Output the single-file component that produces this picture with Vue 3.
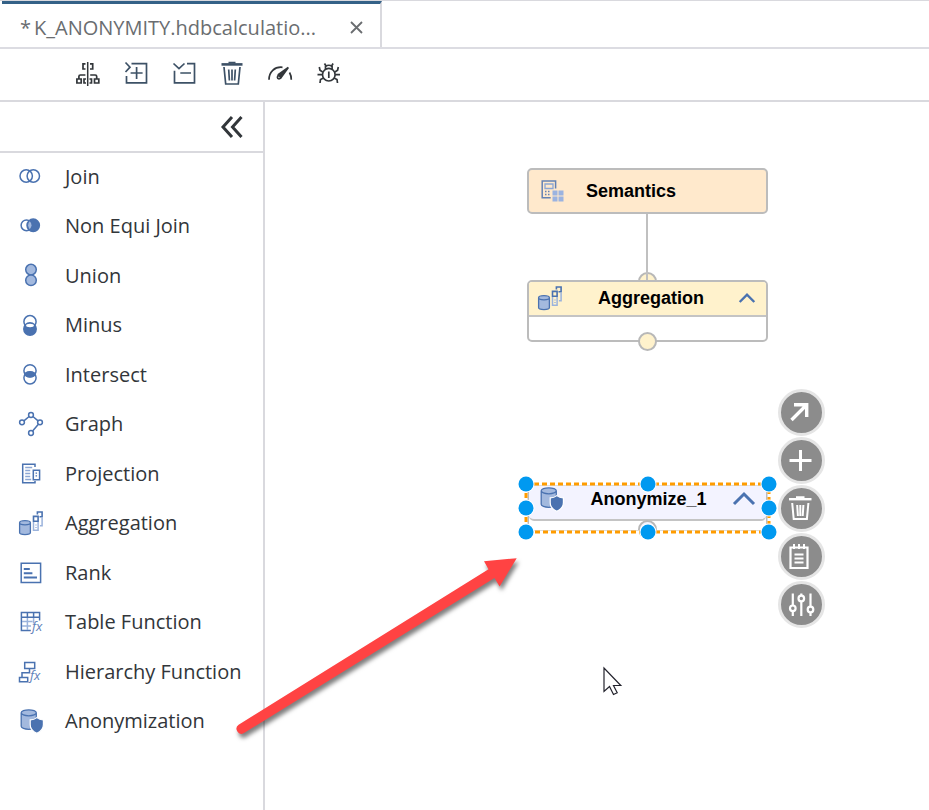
<script setup>
import { ref } from 'vue'

const cylinder = (x1, x2, y1, y2, ry) => {
  const rx = (x2 - x1) / 2
  return `<path fill="#a3b9de" stroke="#4a72b0" stroke-width="1.3" d="M${x1} ${y1 + ry}V${y2 - ry}A${rx} ${ry} 0 0 0 ${x2} ${y2 - ry}V${y1 + ry}A${rx} ${ry} 0 0 0 ${x1} ${y1 + ry}A${rx} ${ry} 0 0 0 ${x2} ${y1 + ry}"/>`
}

const art = {
  join: '<circle cx="8.2" cy="12" r="6.2"/><circle cx="15.3" cy="12" r="6.2"/>',
  nonEqui: '<circle cx="8.5" cy="11.3" r="5.4"/><circle cx="15.2" cy="11.3" r="6.2" fill="#4a72b0"/><path fill="#a3b9de" stroke="none" d="M11.7 7.3a5.4 5.4 0 0 1 0 8a6 6 0 0 1 0-8z"/>',
  union: '<g fill="#a3b9de"><circle cx="13" cy="6.6" r="5.3"/><circle cx="13" cy="17.2" r="5.3"/></g>',
  minus: '<circle cx="12" cy="16" r="6.2" fill="#4a72b0"/><circle cx="12" cy="8.7" r="6.1"/><ellipse cx="12" cy="12.5" rx="3.9" ry="1.7" fill="#fff" stroke="none"/>',
  intersect: '<circle cx="12" cy="8.8" r="6.1"/><circle cx="12" cy="15.8" r="6.1"/><ellipse cx="12" cy="12.3" rx="4.8" ry="2.4" fill="#4a72b0"/>',
  graph: '<circle cx="13" cy="3" r="2.4"/><circle cx="4" cy="10.3" r="2.4"/><circle cx="22" cy="10.3" r="2.4"/><circle cx="13" cy="21" r="2.4"/><path d="M11.1 4.5L5.9 8.8M14.9 4.5l5.2 4.3M20.4 12.2l-5.8 6.9"/>',
  projection: '<path d="M17 6V3.3H4.7v18.4H17V20"/><path stroke="#8ba6d4" d="M7.2 6.5h7M7.2 9.5h5M7.2 12.5h5M7.2 15.5h5M7.2 18.5h6"/><path d="M15.3 9.2h6.3v9.6h-6.3z"/><path stroke-dasharray="1.3 1.5" d="M18.3 11.5v5"/>',
  aggregation: cylinder(1.6, 12.4, 9.7, 23.7, 2.1) + '<path stroke-width="1.6" d="M15.5 5.4h4.6v4.8h-4.6zM19.4 3.4V1h4.7v4.8h-2.6"/><path stroke="#9bb3dc" stroke-width="1.5" d="M15.5 11v8.2h4.6V11M24.1 6.5v8.2h-2.2M18 13.5v1M18 16v1"/>',
  rank: '<path stroke-width="1.5" d="M3.2 3.2h19.4v19.4H3.2z"/><path stroke-width="2" d="M5.8 9h6M5.8 13.2h8.6M5.8 17.6H19"/>',
  table: '<path stroke-width="1.5" d="M3.4 2.6h18.2v4.6H3.4zM9.4 2.6v4.6M15.6 2.6v4.6M3.4 7v13.6h9.4M21.6 7v3.4"/><path stroke="#9bb3dc" d="M9.4 8v12M15.6 8v5.5M4 11.6h10.5M4 16h9"/><text x="14" y="21.2" font-family="Open Sans, sans-serif" font-style="italic" font-size="13" fill="#5d80b9" stroke="none">fx</text>',
  hierarchy: '<path stroke-width="1.5" d="M6.7 3.4h10v6.2h-10zM1.5 18.4h8.2v4.4H1.5zM11.5 9.7v4H4v4.5"/><text x="12" y="21.2" font-family="Open Sans, sans-serif" font-style="italic" font-size="13" fill="#5d80b9" stroke="none">fx</text>',
  anonymization: cylinder(3.2, 18.3, 0.8, 20.3, 3) + '<path fill="#4a72b0" stroke="#fff" stroke-width="1.2" d="M18.8 8.6q3 2.4 6.6 2.3v4.8q0 5.6-6.6 8.6q-6.6-3-6.6-8.6v-4.8q3.6 .1 6.6-2.3z"/>',
  semantics: '<g stroke="#6482b4"><path stroke-width="1.5" d="M15.6 9.5V2H2.2v16.8h8.5"/><path stroke="#8ba6d4" d="M5 5h8v4.5H5z"/><path stroke-width="1.5" stroke-dasharray="1.5 1.5" d="M5 12.5h6M5 15.5h6"/></g><path fill="#9bb3e0" stroke="none" d="M12.5 11.5h5v5h-5zM18.5 11.5h5v5h-5zM12.5 17.5h5v5h-5zM18.5 17.5h5v5h-5z"/>'
}

const tools = [
  { label: 'Auto layout', tone: 'dark', art: '<path d="M11.7 0v24" stroke-width="1.5"/><path d="M9.5 1.8H7v5.2h2.5M14 1.8h2.7v5.2H14M2.9 17v-2.5q0-1.5 1.5-1.5h5M20.7 17v-2.5q0-1.5-1.5-1.5h-5M.9 17h4.3v4H.9zM18.5 17h4.3v4h-4.3zM10 17H8v4h2M13.5 17h2v4h-2"/>' },
  { label: 'Expand all', tone: 'slate', art: '<path d="M1.5 .5L6 5.2 1.5 10M7.5 1.6h15v19.2h-20V14M12.6 5v12M6.6 11h12"/>' },
  { label: 'Collapse all', tone: 'slate', art: '<path d="M1.5 1.5L7 6.7l5.5-5.2M15 1.6h7.5v19.2h-20V8.7M8.3 11H19"/>' },
  { label: 'Delete', tone: 'slate', art: '<path stroke-width="2.6" d="M1.5 2.4h21"/><path d="M8.5 .7h7M4 5l1.7 17h12.6l1.7-17M8.7 7.5l.7 11M12 7.5v11M15.3 7.5l-.7 11"/>' },
  { label: 'Performance', tone: 'dark', art: '<path d="M1 17.7C1 10 6.5 4.5 14.5 5.3M21.5 10.5q1.8 3 1.8 7.2"/><circle cx="11" cy="15.3" r="1.6"/><path fill="currentColor" d="M10.5 12.5L20.3 5.5l-7.3 10z"/>' },
  { label: 'Debug', tone: 'dark', art: '<circle cx="12.8" cy="12.7" r="6.3"/><path d="M12.8 9.5v6.5M9.5 7V4.5q3.3-2.5 6.6 0V7M10 4L8.5 1.5M15.6 4l1.5-2.5M6.7 10L4 8.3 3.3 5M18.9 10l2.7-1.7.7-3.3M6.5 12.7h-5M19 12.7h5M7.5 16l-3 1.5L4 21M18 16l3 1.5.5 3.5"/>' }
]

const palette = [
  ['Join', 'join'], ['Non Equi Join', 'nonEqui'], ['Union', 'union'], ['Minus', 'minus'],
  ['Intersect', 'intersect'], ['Graph', 'graph'], ['Projection', 'projection'],
  ['Aggregation', 'aggregation'], ['Rank', 'rank'], ['Table Function', 'table'],
  ['Hierarchy Function', 'hierarchy'], ['Anonymization', 'anonymization']
]

const actions = [
  { label: 'Connect', art: '<path stroke-width="3.4" d="M2.5 20L17 5.5M5 4.8h12.7V17"/>' },
  { label: 'Add', art: '<path stroke-width="3" d="M11.5 2v21M.5 12.5h22"/>' },
  { label: 'Delete', art: '<path stroke-width="2.4" d="M0 3.2h22.5"/><path stroke-width="2" d="M7 1.3h8.5M3.2 7l1.5 16h13.2l1.5-16M8.2 9l.7 11M11.3 9v11M14.4 9l-.7 11"/>' },
  { label: 'Details', art: '<path stroke-width="2.2" d="M1.5 3.5h17v20.5h-17z"/><path stroke-width="2" d="M5 0v5M10 0v5M15 0v5M5.5 10.5h9M5.5 14.5h9M5.5 18.5h9"/>' },
  { label: 'Settings', art: '<g stroke-width="2.2"><path d="M3.8 1.5v12M3.8 19v5M12.3 1.5v2M12.3 9.5v14.5M21.5 1.5v13M21.5 20.5v3.5"/><circle cx="3.8" cy="16.3" r="2.8"/><circle cx="12.3" cy="6.5" r="2.8"/><circle cx="21.5" cy="17.5" r="2.8"/></g>' }
]

const handles = ['nw', 'n', 'ne', 'w', 'e', 'sw', 's', 'se']
const selected = ref('Anonymize_1')
</script>

<template>
  <div class="page">
    <header class="tabs" role="tablist">
      <div class="tab">
        <button class="tab-name" role="tab" aria-selected="true"><span>*</span><span>K_ANONYMITY.hdbcalculatio...</span></button>
        <button class="close" aria-label="Close">
          <svg width="11" height="11" viewBox="0 0 11 11"><path d="M0 0l11 11M11 0L0 11" stroke="currentColor" stroke-width="1.8" /></svg>
        </button>
      </div>
    </header>

    <nav class="toolbar" aria-label="Editor tools">
      <button v-for="t in tools" :key="t.label" :class="t.tone" :aria-label="t.label">
        <svg width="25" height="24" viewBox="0 0 25 24" fill="none" stroke="currentColor" stroke-width="1.7" v-html="t.art" />
      </button>
    </nav>

    <main class="workspace">
      <aside class="sidebar">
        <div class="side-head">
          <button aria-label="Collapse palette">
            <svg width="22" height="22" viewBox="0 0 22 22" fill="none" stroke="#32363a" stroke-width="3"><path d="M11 1L2 11l9 10M20.5 1l-9 10 9 10" /></svg>
          </button>
        </div>
        <ul class="palette">
          <li v-for="[label, icon] in palette" :key="label">
            <button>
              <svg width="26" height="26" viewBox="0 -1 26 26" fill="none" stroke="#4a72b0" stroke-width="1.5" v-html="art[icon]" />
              <span>{{ label }}</span>
            </button>
          </li>
        </ul>
      </aside>

      <section class="canvas" aria-label="Calculation view">
        <div class="port port-top"></div>
        <div class="link"></div>

        <article class="node semantics">
          <svg width="26" height="26" viewBox="0 -1 26 26" fill="none" stroke-width="1.3" v-html="art.semantics" />
          <h2>Semantics</h2>
        </article>

        <article class="node aggregation">
          <div class="node-head">
            <svg width="26" height="26" viewBox="0 -1 26 26" fill="none" stroke="#4a72b0" stroke-width="1.3" v-html="art.aggregation" />
            <h2>Aggregation</h2>
            <button aria-label="Collapse Aggregation">
              <svg width="16" height="10" viewBox="0 0 16 10" fill="none" stroke="#4a72b0" stroke-width="2.4"><path d="M.7 9L8 1.7 15.3 9" /></svg>
            </button>
          </div>
          <div class="port port-bottom"></div>
        </article>

        <article class="node anonymize" @click="selected = 'Anonymize_1'">
          <div class="node-head">
            <svg width="26" height="26" viewBox="0 -1 26 26" fill="none" stroke="#4a72b0" stroke-width="1.3" v-html="art.anonymization" />
            <h2>Anonymize_1</h2>
            <button aria-label="Collapse Anonymize_1">
              <svg width="22" height="13" viewBox="0 0 22 13" fill="none" stroke="#4a72b0" stroke-width="3"><path d="M1 12L11 2l10 10" /></svg>
            </button>
          </div>
          <div class="port port-bottom"></div>
        </article>

        <div v-if="selected" class="selection">
          <svg width="100%" height="100%"><rect width="100%" height="100%" fill="none" stroke="#fff" stroke-width="3" /><rect width="100%" height="100%" fill="none" stroke="#ff9c00" stroke-width="3" stroke-dasharray="5 3" /></svg>
          <i v-for="h in handles" :key="h" class="handle" :class="h"></i>
        </div>

        <div class="actions">
          <button v-for="a in actions" :key="a.label" :aria-label="a.label">
            <svg width="24" height="25" viewBox="1 0 24 25" fill="none" stroke="#fff" v-html="a.art" />
          </button>
        </div>

        <svg class="pointer" width="20" height="28" viewBox="0 0 20 28"><path d="M1 1v23.5l5.5-5 4 8 3.7-1.7-3.7-7.3h7.3z" fill="#fff" stroke="#23232d" stroke-width="1.2" /></svg>
      </section>
    </main>

    <svg class="arrow" width="300" height="200" viewBox="225 545 300 200" aria-hidden="true">
      <path d="M238.6 724.7L488.5 569.3 484 561.2 516.7 558.2 499.6 586.6 494.5 578 243.6 733.3A5 5 0 0 1 238.6 724.7z" fill="#ff4343" />
    </svg>
  </div>
</template>

<style>
body { margin: 0; background: #fff; }
</style>

<style scoped>
.page {
  position: relative;
  display: flex;
  flex-direction: column;
  min-height: 100vh;
  overflow: hidden;
  font-family: "Open Sans", "Noto Sans", sans-serif;
  font-size: 20px;
  color: #32363a;
}
.page, .page * { box-sizing: border-box; }
button {
  padding: 0;
  border: 0;
  background: none;
  font: inherit;
  color: inherit;
  cursor: pointer;
}
svg { display: block; overflow: visible; }

.tabs {
  display: flex;
  height: 49px;
  padding-left: 2px;
  border-top: 1px solid #d9d9de;
  border-bottom: 2px solid #dcdce2;
}
.tab {
  display: flex;
  align-items: center;
  justify-content: space-between;
  width: 380px;
  padding: 4px 18px 0;
  border-top: 3px solid #346187;
  border-right: 2px solid #d9d9de;
  color: #6a6d70;
}
.tab-name { display: flex; gap: 3px; }
.toolbar {
  display: flex;
  align-items: center;
  gap: 24px;
  height: 53px;
  padding: 0 76px 2px;
  border-bottom: 2px solid #d9d9de;
}
.toolbar button { width: 24px; }
.dark { color: #32363a; }
.slate { color: #3d5166; }

.workspace { display: flex; flex: 1; }
.sidebar {
  flex: none;
  width: 265px;
  border-right: 2px solid #d9d9de;
}
.side-head {
  display: flex;
  align-items: center;
  justify-content: flex-end;
  height: 51px;
  padding-right: 20px;
  border-bottom: 2px solid #d9d9de;
}
.palette {
  display: grid;
  grid-template-rows: repeat(6, 49px 50px);
  margin: 0;
  padding: 0;
  list-style: none;
}
.palette button {
  display: flex;
  align-items: center;
  gap: 21px;
  width: 100%;
  height: 100%;
  padding: 0 0 3px 18px;
  text-align: left;
}

.canvas { position: relative; flex: 1; }
.node {
  position: absolute;
  left: 262px;
  width: 241px;
  border: 2px solid #bcbcbc;
  border-radius: 5px;
  background: #fff;
}
.node h2 {
  margin: 0;
  font: bold 18px/20px "Liberation Sans", Arial, sans-serif;
  color: #000;
}
.node-head {
  display: flex;
  align-items: center;
  height: 35px;
  border-bottom: 2px solid #c4c4c4;
}
.semantics {
  top: 66px;
  display: flex;
  align-items: center;
  gap: 20px;
  height: 46px;
  padding-left: 11px;
  background: #ffe9cc;
}
.aggregation { top: 178px; height: 62px; }
.aggregation .node-head { padding: 0 11px 2px 8px; background: #fff2cc; border-radius: 3px 3px 0 0; }
.anonymize { top: 382px; height: 48px; }
.anonymize .node-head { padding: 0 11px 8px 9px; background: #f3f3ff; border-radius: 3px 3px 5px 5px; }
.node-head h2 { flex: 1; text-align: center; }
.link {
  position: absolute;
  left: 381px;
  top: 112px;
  width: 2px;
  height: 67px;
  background: #c0c0c0;
}
.port {
  position: absolute;
  width: 19px;
  height: 19px;
  border: 2px solid #b8b8b8;
  border-radius: 50%;
  background: #fff2cc;
}
.port-top { left: 373px; top: 170px; }
.port-bottom { left: 109px; bottom: -11px; }
.anonymize .port-bottom { bottom: -9px; background: #f3f3ff; }

.selection {
  position: absolute;
  left: 261px;
  top: 382px;
  width: 243px;
  height: 48px;
  pointer-events: none;
}
.handle {
  position: absolute;
  width: 15px;
  height: 15px;
  border-radius: 50%;
  background: #0099f0;
  box-shadow: 0 0 0 1px #fff;
  transform: translate(-50%, -50%);
}
.nw, .w, .sw { left: 0; }
.n, .s { left: 50%; }
.ne, .e, .se { left: 100%; }
.nw, .n, .ne { top: 0; }
.w, .e { top: 50%; }
.sw, .s, .se { top: 100%; }

.actions {
  position: absolute;
  left: 513px;
  top: 287px;
  display: flex;
  flex-direction: column;
  gap: 1px;
}
.actions button {
  display: grid;
  place-items: center;
  width: 47px;
  height: 47px;
  border: 3px solid #e5e5e5;
  border-radius: 50%;
  background: #8c8c8c;
}
.pointer { position: absolute; left: 338px; top: 565px; }
.arrow {
  position: absolute;
  left: 225px;
  top: 545px;
  pointer-events: none;
  filter: drop-shadow(2px 4px 2px rgba(0, 0, 0, 0.5));
}
</style>
